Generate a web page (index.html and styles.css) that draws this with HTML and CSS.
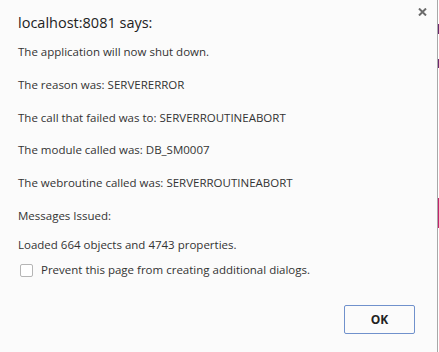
FILE: index.html
```html
<!DOCTYPE html>
<html lang="en">
<head>
  <meta charset="UTF-8" />
  <title>localhost:8081 says</title>
  <link rel="stylesheet" href="styles.css">
</head>
<body>
  <div class="dialog">
    <button class="close" aria-label="Close">
      <svg width="9" height="8" viewBox="0 0 9 8"><path d="M1 0.5 L8 7.5 M8 0.5 L1 7.5" stroke="#6b6b6b" stroke-width="2"/></svg>
    </button>
    <h1 class="title">localhost:8081 says:</h1>
    <div class="message">
      <p>The application will now shut down.</p>
      <p>The reason was: SERVERERROR</p>
      <p>The call that failed was to: SERVERROUTINEABORT</p>
      <p>The module called was: DB_SM0007</p>
      <p>The webroutine called was: SERVERROUTINEABORT</p>
      <p>Messages Issued:</p>
      <p class="last">Loaded 664 objects and 4743 properties.</p>
    </div>
    <label class="prevent">
      <span class="box"></span>
      Prevent this page from creating additional dialogs.
    </label>
    <div class="actions">
      <button class="ok">OK</button>
    </div>
  </div>
</body>
</html>
```

FILE: styles.css
```css
body {
  margin: 0;
  padding: 0;
  font-family: 'Open Sans', 'Noto Sans', sans-serif;
  color: #333;
  background: linear-gradient(to bottom,
    #fff 0, #fff 24px, #6a2a6e 24px, #6a2a6e 34px, #fff 34px,
    #fff 59px, #6a2a6e 59px, #6a2a6e 68px, #fff 68px,
    #fff 198px, #c0256e 198px, #c0256e 228px, #fff 228px);
  width: 439px;
  height: 352px;
  overflow: hidden;
}

.dialog {
  position: relative;
  width: 438px;
  height: 352px;
  box-sizing: border-box;
  background: #fbfbfb;
  border-right: 1px solid #a8a8a8;
  padding: 13px 18px 0 18px;
}

.close {
  position: absolute;
  top: 8px;
  right: 10px;
  border: none;
  background: none;
  padding: 0;
  line-height: 0;
  cursor: pointer;
}

.title {
  margin: 0;
  font-size: 14.5px;
  font-weight: 400;
  line-height: 20px;
  color: #222;
}

.message {
  display: flex;
  flex-direction: column;
  gap: 16.8px;
  margin-top: 11px;
}

.message p {
  margin: 0;
  font-size: 11.5px;
  line-height: 16px;
}

.message .last {
  margin-top: -3.5px;
}

.prevent {
  display: flex;
  align-items: center;
  gap: 8px;
  margin-top: 9px;
  margin-left: 2px;
  font-size: 11.5px;
  line-height: 16px;
}

.prevent .box {
  width: 11px;
  height: 11px;
  border: 1px solid #b5b5b5;
  border-radius: 2px;
  background: #fff;
}

.actions {
  display: flex;
  justify-content: flex-end;
  margin-top: 27px;
  padding-right: 4px;
}

.ok {
  width: 71px;
  height: 29px;
  box-sizing: border-box;
  border: 1px solid #7091cc;
  border-radius: 2px;
  background: #fbfbfb;
  font-family: 'Open Sans', 'Noto Sans', sans-serif;
  font-size: 12px;
  font-weight: 700;
  color: #222;
  cursor: pointer;
}
```
